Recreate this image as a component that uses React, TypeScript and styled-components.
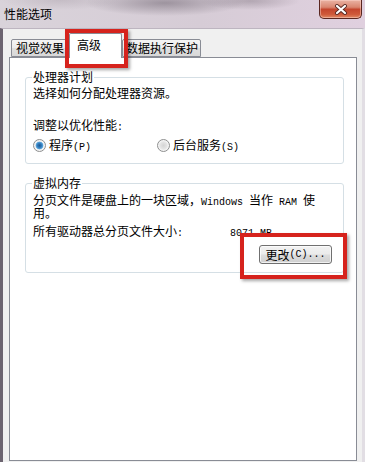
import React from "react";
import styled, { createGlobalStyle } from "styled-components";

const GlobalStyle = createGlobalStyle`
  html, body { margin: 0; padding: 0; }
  body {
    font-family: "Noto Sans CJK SC", "Noto Sans", sans-serif;
    font-size: 12px;
    color: #000;
    background: #f0f0f0;
  }
`;

const Window = styled.div`
  position: relative;
  width: 365px;
  height: 462px;
  display: flex;
  flex-direction: column;
  background: #f0f0f0;
  overflow: hidden;
`;

const TitleBar = styled.div`
  height: 28px;
  flex: none;
  display: flex;
  align-items: flex-start;
  justify-content: space-between;
  padding: 0 3px 0 4px;
  box-sizing: border-box;
  background:
    radial-gradient(ellipse 80px 13px at 165px 3px, rgba(110, 100, 112, 0.55), transparent),
    radial-gradient(ellipse 50px 9px at 250px 1px, rgba(120, 108, 120, 0.4), transparent),
    radial-gradient(ellipse 60px 10px at 60px 0px, rgba(160, 150, 160, 0.35), transparent),
    linear-gradient(to right, #d9d3da, #d6ccd6 55%, #e0d0df);
`;

const Title = styled.span`
  font-size: 12px;
  line-height: 28px;
  color: #000;
`;

const CloseButton = styled.div`
  width: 43px;
  height: 19px;
  box-sizing: border-box;
  border: 1px solid #5a2620;
  border-top: none;
  border-radius: 0 0 5px 5px;
  background: linear-gradient(#eab3a4 0%, #d98670 40%, #c4462e 52%, #cf5a3a 80%, #e08a66 100%);
  display: flex;
  align-items: center;
  justify-content: center;
  box-shadow: inset 0 0 0 1px rgba(255, 220, 210, 0.45);
`;

const Body = styled.div`
  flex: 1;
  display: flex;
  flex-direction: column;
  border-top: 1px solid #bdb5c0;
  border-left: 3px solid #6c6470;
  border-right: 3px solid #e2dee4;
  padding: 4px 5px 1px 6px;
`;

const TabStrip = styled.div`
  height: 24px;
  flex: none;
  display: flex;
  align-items: flex-end;
  padding-left: 2px;
`;

const Tab = styled.div<{ $active?: boolean; $pl: number; $pr: number }>`
  box-sizing: border-box;
  height: ${(p) => (p.$active ? 25 : 18)}px;
  margin-bottom: ${(p) => (p.$active ? -1 : 0)}px;
  position: relative;
  z-index: ${(p) => (p.$active ? 2 : 1)};
  border: 1px solid #898c95;
  border-bottom: ${(p) => (p.$active ? "none" : "1px solid #898c95")};
  border-radius: 2px 2px 0 0;
  padding: 0 ${(p) => p.$pr}px 0 ${(p) => p.$pl}px;
  line-height: ${(p) => (p.$active ? 21 : 16)}px;
  white-space: nowrap;
  background: ${(p) =>
    p.$active ? "#fff" : "linear-gradient(#f4f4f4, #ececec 50%, #e0e0e0 51%, #d8d8d8)"};
`;

const Panel = styled.div`
  flex: 1;
  border: 1px solid #898c95;
  background: #fff;
  padding: 0 12px 0 15px;
`;

const Group = styled.div<{ $mt: number; $pb: number }>`
  margin-top: ${(p) => p.$mt}px;
  border: 1px solid #d5dfe5;
  border-radius: 3px;
  padding: 0 7px ${(p) => p.$pb}px 7px;
`;

const GroupLabel = styled.div`
  width: fit-content;
  margin: -7px 0 0 -1px;
  padding: 0 1px;
  line-height: 12px;
  background: #fff;
`;

const Line = styled.div<{ $mt: number; $lh?: number }>`
  margin-top: ${(p) => p.$mt}px;
  line-height: ${(p) => p.$lh ?? 16}px;
  white-space: nowrap;
`;

const Mono = styled.span`
  font-family: "Liberation Mono", "DejaVu Sans Mono", monospace;
  font-size: 10px;
  line-height: 0;
`;

const RadioRow = styled.div`
  margin-top: 4px;
  height: 16px;
  display: flex;
  align-items: center;
`;

const RadioOption = styled.label<{ $w?: number }>`
  display: flex;
  align-items: center;
  gap: 3px;
  width: ${(p) => (p.$w ? `${p.$w}px` : "auto")};
  line-height: 16px;
`;

const RadioCircle = styled.span<{ $checked?: boolean }>`
  width: 13px;
  height: 13px;
  box-sizing: border-box;
  border-radius: 50%;
  border: 1px solid #8e8f8f;
  flex: none;
  background: ${(p) =>
    p.$checked
      ? "radial-gradient(circle at 50% 50%, #1f5a93 0, #2f78b8 2px, #5aa6dc 3.5px, #e9eef2 4.2px, #f4f4f4 100%)"
      : "radial-gradient(circle at 50% 50%, #d4d4d4 0, #e2e2e2 3px, #f6f6f6 6px)"};
  box-shadow: inset 0 0 0 1px #f4f4f4;
`;

const MemLabel = styled.span`
  display: inline-block;
  width: 197px;
`;

const ButtonRow = styled.div`
  margin-top: 6px;
  display: flex;
  justify-content: flex-end;
  padding-right: 4px;
`;

const Button = styled.div`
  width: 73px;
  height: 19px;
  box-sizing: border-box;
  border: 1px solid #707070;
  border-radius: 3px;
  background: linear-gradient(#f2f2f2, #ebebeb 48%, #dddddd 52%, #cfcfcf);
  box-shadow: inset 0 0 0 1px rgba(255, 255, 255, 0.7);
  display: flex;
  align-items: center;
  justify-content: center;
  line-height: 17px;
`;

const Highlight = styled.div<{ $x: number; $y: number; $w: number; $h: number }>`
  position: absolute;
  left: ${(p) => p.$x}px;
  top: ${(p) => p.$y}px;
  width: ${(p) => p.$w}px;
  height: ${(p) => p.$h}px;
  box-sizing: border-box;
  border: 4px solid #d6231d;
  box-shadow: 2px 2px 3px rgba(0, 0, 0, 0.35);
  z-index: 5;
  pointer-events: none;
`;

const CloseIcon = () => (
  <svg width="14" height="11" viewBox="0 0 14 11">
    <path d="M3 2 L11 9 M11 2 L3 9" stroke="#5a2a24" strokeWidth="4" strokeLinecap="round" />
    <path d="M3 2 L11 9 M11 2 L3 9" stroke="#ffffff" strokeWidth="2.2" strokeLinecap="round" />
  </svg>
);

export default function App() {
  return (
    <>
      <GlobalStyle />
      <Window>
        <TitleBar>
          <Title>性能选项</Title>
          <CloseButton>
            <CloseIcon />
          </CloseButton>
        </TitleBar>
        <Body>
          <TabStrip>
            <Tab $pl={4} $pr={4}>视觉效果</Tab>
            <Tab $active $pl={7} $pr={20}>高级</Tab>
            <Tab $pl={3} $pr={2}>数据执行保护</Tab>
          </TabStrip>
          <Panel>
            <Group $mt={19} $pb={10}>
              <GroupLabel>处理器计划</GroupLabel>
              <Line $mt={2}>选择如何分配处理器资源。</Line>
              <Line $mt={16}>
                调整以优化性能<Mono>:</Mono>
              </Line>
              <RadioRow>
                <RadioOption $w={124}>
                  <RadioCircle $checked />
                  <span>
                    程序<Mono>(P)</Mono>
                  </span>
                </RadioOption>
                <RadioOption>
                  <RadioCircle />
                  <span>
                    后台服务<Mono>(S)</Mono>
                  </span>
                </RadioOption>
              </RadioRow>
            </Group>
            <Group $mt={19} $pb={8}>
              <GroupLabel>虚拟内存</GroupLabel>
              <Line $mt={4} $lh={13}>
                分页文件是硬盘上的一块区域，<Mono>Windows </Mono>当作<Mono> RAM </Mono>使
                <br />
                用。
              </Line>
              <Line $mt={4}>
                <MemLabel>
                  所有驱动器总分页文件大小<Mono>:</Mono>
                </MemLabel>
                <Mono>8071 MB</Mono>
              </Line>
              <ButtonRow>
                <Button>
                  更改<Mono>(C)...</Mono>
                </Button>
              </ButtonRow>
            </Group>
          </Panel>
        </Body>
        <Highlight $x={65} $y={29} $w={63} $h={39} />
        <Highlight $x={240} $y={233} $w={107} $h={46} />
      </Window>
    </>
  );
}
